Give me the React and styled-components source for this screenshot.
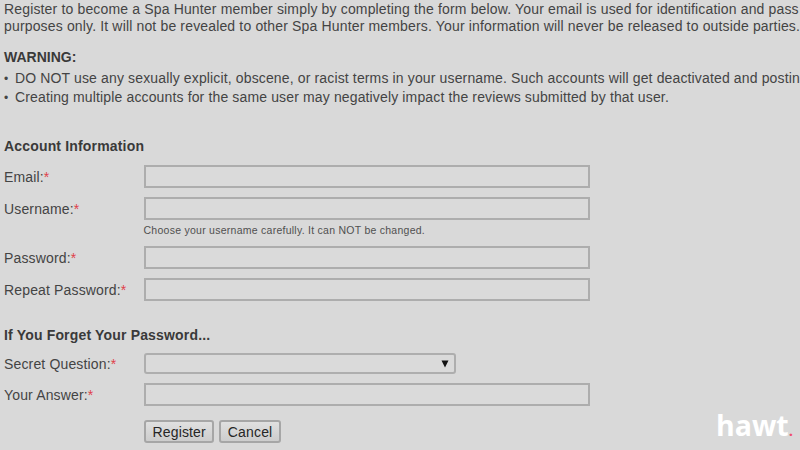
import React from 'react'
import styled, { createGlobalStyle } from 'styled-components'

const Global = createGlobalStyle`
  html, body {
    margin: 0;
    padding: 0;
    width: 800px;
    height: 450px;
    overflow: hidden;
    background: #d9d9d9;
  }
`

const Page = styled.div`
  position: relative;
  width: 800px;
  height: 450px;
  overflow: hidden;
  padding: 1px 0 0 4px;
  box-sizing: border-box;
  background: #d9d9d9;
  color: #444444;
  font-family: "Liberation Sans", Arial, sans-serif;
  font-size: 14px;
`

const Intro = styled.div`
  white-space: nowrap;
  line-height: 16.5px;
  letter-spacing: 0.155px;
`

const WarningTitle = styled.div`
  margin-top: 15px;
  font-weight: bold;
  line-height: 17px;
  color: #3a3a3a;
`

const Bullets = styled.div`
  margin-top: 3px;
  white-space: nowrap;
  line-height: 19px;
  letter-spacing: 0.14px;
`

const Bullet = styled.span`
  display: inline-block;
  width: 11px;
  font-size: 12px;
  line-height: 1;
`

const SectionTitle = styled.div`
  font-weight: bold;
  line-height: 17px;
  color: #3a3a3a;
  margin-top: ${(props) => props.$top}px;
  margin-bottom: ${(props) => props.$bottom}px;
  letter-spacing: 0.17px;
`

const Row = styled.div`
  display: flex;
  align-items: center;
  margin-top: ${(props) => props.$top || 0}px;
`

const Label = styled.label`
  width: 140px;
  flex: none;
  letter-spacing: 0.15px;
`

const Star = styled.span`
  color: #e0404a;
`

const Field = styled.div`
  box-sizing: border-box;
  height: 23px;
  width: 446px;
  border: 2px solid #adadad;
  background: #dadada;
`

const Select = styled.div`
  box-sizing: border-box;
  height: 21px;
  width: 312px;
  border: 2px solid #aeaeae;
  border-radius: 3px;
  background: #dadada;
  display: flex;
  align-items: center;
  justify-content: flex-end;
  padding-right: 5px;
`

const Hint = styled.div`
  margin: 3px 0 0 139.5px;
  padding-top: 1px;
  font-size: 10.5px;
  line-height: 13px;
  letter-spacing: 0.26px;
  color: #505050;
`

const Buttons = styled.div`
  display: flex;
  gap: 5px;
  margin: 14px 0 0 140px;
`

const Button = styled.div`
  box-sizing: border-box;
  height: 23px;
  padding: 0 6.5px;
  display: flex;
  align-items: center;
  border: 2px solid #a6a6a6;
  border-radius: 3px;
  background: linear-gradient(#e0e0e0, #cdcdcd);
  color: #262626;
  letter-spacing: 0.15px;
`

const Brand = styled.div`
  position: absolute;
  right: 7px;
  bottom: 0;
  font-family: "Open Sans", sans-serif;
  font-weight: 700;
  font-size: 28.5px;
  line-height: 39px;
  color: #ffffff;
`

const Dot = styled.span`
  color: #f0506e;
  font-size: 15px;
`

const Req = ({ children }) => (
  <Label>
    {children}:<Star>*</Star>
  </Label>
)

const Arrow = () => (
  <svg width="8" height="8" viewBox="0 0 8 8">
    <path d="M0.5 0.5h7L4 7.5z" fill="#111" />
  </svg>
)

export default function App() {
  return (
    <Page>
      <Global />
      <Intro>
        Register to become a Spa Hunter member simply by completing the form below. Your email is used for identification and pass
        <br />
        purposes only. It will not be revealed to other Spa Hunter members. Your information will never be released to outside parties.
      </Intro>
      <WarningTitle>WARNING:</WarningTitle>
      <Bullets>
        <Bullet>•</Bullet>DO NOT use any sexually explicit, obscene, or racist terms in your username. Such accounts will get deactivated and postin
        <br />
        <Bullet>•</Bullet>Creating multiple accounts for the same user may negatively impact the reviews submitted by that user.
      </Bullets>
      <SectionTitle $top={31} $bottom={10}>Account Information</SectionTitle>
      <Row $top={1}>
        <Req>Email</Req>
        <Field />
      </Row>
      <Row $top={9}>
        <Req>Username</Req>
        <Field />
      </Row>
      <Hint>Choose your username carefully. It can NOT be changed.</Hint>
      <Row $top={9}>
        <Req>Password</Req>
        <Field />
      </Row>
      <Row $top={9}>
        <Req>Repeat Password</Req>
        <Field />
      </Row>
      <SectionTitle $top={26} $bottom={9}>If You Forget Your Password...</SectionTitle>
      <Row $top={1}>
        <Req>Secret Question</Req>
        <Select>
          <Arrow />
        </Select>
      </Row>
      <Row $top={9}>
        <Req>Your Answer</Req>
        <Field />
      </Row>
      <Buttons>
        <Button>Register</Button>
        <Button>Cancel</Button>
      </Buttons>
      <Brand>
        hawt<Dot>.</Dot>
      </Brand>
    </Page>
  )
}
